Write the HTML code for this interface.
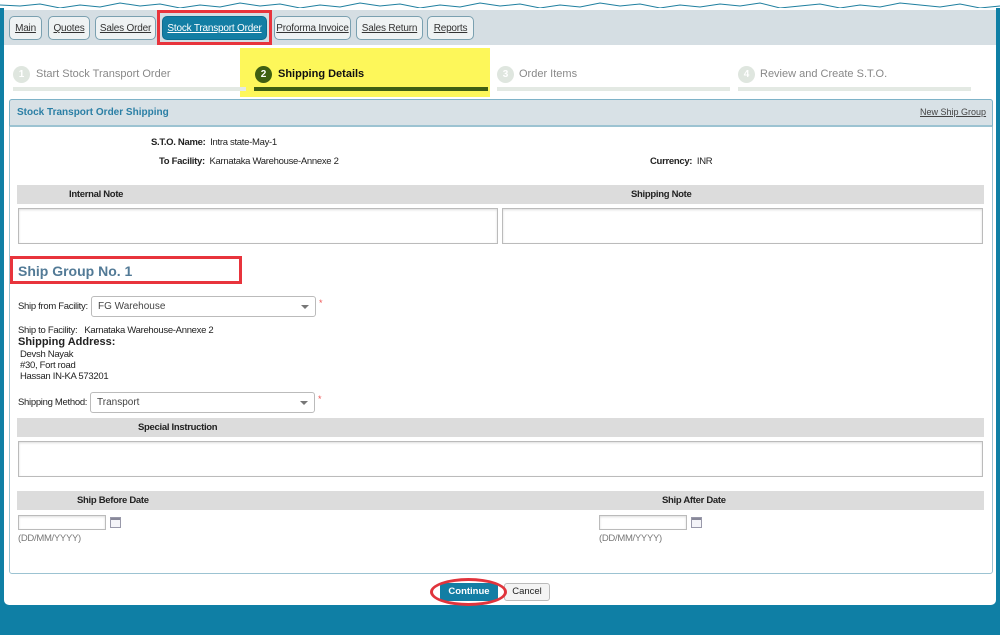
<!DOCTYPE html>
<html><head><meta charset="utf-8"><style>
*{margin:0;padding:0;box-sizing:border-box}
body{width:1000px;height:635px;background:#0f7fa5;font-family:"Liberation Sans",Arial,sans-serif;position:relative;overflow:hidden;color:#222}
.a{position:absolute}
.panel{left:4px;top:8px;width:992px;height:597px;background:#fff;border-radius:0 0 5px 5px}
.tabbar{left:4px;top:10px;width:992px;height:35px;background:#d5dee3}
.tab{position:absolute;top:16px;height:24px;border:1px solid #7aa0b0;border-radius:5px;background:#eef2f3;font-size:10px;line-height:23px;text-align:center;text-decoration:underline;color:#333;letter-spacing:-0.2px}
.step{font-size:11px;color:#888;top:68px}
.circ{position:absolute;top:66px;width:17px;height:17px;border-radius:50%;background:#dfe6df;color:#fff;font-size:10px;font-weight:bold;text-align:center;line-height:17px}
.ul{position:absolute;top:87px;height:4px;background:#e3e9e3}
.bar{position:absolute;height:19px;background:#dcdcdc;font-size:9.5px;font-weight:bold;line-height:19px;letter-spacing:-0.3px}
.ta{position:absolute;border:1px solid #bbb;background:#fff;box-shadow:inset 0 1px 2px #ddd}
.lbl{font-size:9.5px;letter-spacing:-0.3px}
.sel{position:absolute;height:21px;border:1px solid #bbb;border-radius:3px;background:#fff;font-size:10px;line-height:20px;padding-left:6px;color:#444}
.sel:after{content:"";position:absolute;right:6px;top:8px;border:4px solid transparent;border-top:4px solid #777}
.cal{position:absolute;width:11px;height:11px;border:1px solid #99a;background:linear-gradient(#889 0 2px,#f4f4f8 2px)}
</style></head><body>
<div class="a" style="left:0;top:0;width:1000px;height:12px;background:#fff"></div>
<svg class="a" style="left:0;top:0" width="1000" height="12"><path d="M0 5 L20 6 40 4 60 8 80 5 100 7 120 3 140 6 160 4 180 8 200 5 220 7 240 3 260 6 280 4 300 8 320 5 340 7 360 3 380 6 400 4 420 8 440 5 460 7 480 3 500 6 520 4 540 8 560 5 580 7 600 3 620 6 640 4 660 8 680 5 700 7 720 4 740 6 760 3 780 8 800 6 820 4 840 8 860 5 880 7 900 3 920 5 940 7 960 4 980 8 1000 6" fill="none" stroke="#1f7f9f" stroke-width="1"/></svg>
<div class="a" style="left:0;top:8px;width:1000px;height:627px;background:#0f7fa5"></div>
<div class="a panel"></div>
<div class="a tabbar"></div>
<div class="tab" style="left:9px;width:33px">Main</div>
<div class="tab" style="left:48px;width:42px">Quotes</div>
<div class="tab" style="left:95px;width:61px">Sales Order</div>
<div class="a" style="left:157px;top:10px;width:115px;height:35px;border:3px solid #e8343c"></div>
<div class="tab" style="left:162px;width:105px;background:#137ea4;color:#fff;border-color:#0d6d8f">Stock Transport Order</div>
<div class="tab" style="left:274px;width:77px">Proforma Invoice</div>
<div class="tab" style="left:356px;width:67px">Sales Return</div>
<div class="tab" style="left:427px;width:47px">Reports</div>

<div class="a" style="left:240px;top:48px;width:250px;height:49px;background:#fdf75a"></div>
<div class="circ" style="left:13px">1</div><div class="a step" style="left:36px">Start Stock Transport Order</div>
<div class="ul" style="left:13px;width:233px"></div>
<div class="circ" style="left:255px;background:#3f5f12">2</div><div class="a step" style="left:278px;color:#111;font-weight:bold">Shipping Details</div>
<div class="ul" style="left:254px;width:234px;background:#3f5f12"></div>
<div class="circ" style="left:497px">3</div><div class="a step" style="left:519px">Order Items</div>
<div class="ul" style="left:497px;width:233px"></div>
<div class="circ" style="left:738px">4</div><div class="a step" style="left:760px">Review and Create S.T.O.</div>
<div class="ul" style="left:738px;width:233px"></div>

<div class="a" style="left:9px;top:99px;width:984px;height:475px;border:1px solid #9cc3d2;border-radius:3px"></div>
<div class="a" style="left:9px;top:99px;width:984px;height:28px;background:#d8e1e6;border:1px solid #7fb3c8;border-bottom:2px solid #9cc3d2;border-radius:3px 3px 0 0"></div>
<div class="a" style="left:17px;top:107px;font-size:10px;font-weight:bold;color:#2b7fa5">Stock Transport Order Shipping</div>
<div class="a" style="left:920px;top:107px;font-size:9px;text-decoration:underline;color:#444">New Ship Group</div>

<div class="a lbl" style="left:151px;top:137px"><b>S.T.O. Name:</b>&nbsp; Intra state-May-1</div>
<div class="a lbl" style="left:159px;top:156px"><b>To Facility:</b>&nbsp; Karnataka Warehouse-Annexe 2</div>
<div class="a lbl" style="left:650px;top:156px"><b>Currency:</b>&nbsp; INR</div>

<div class="bar" style="left:17px;top:185px;width:967px"><span class="a" style="left:52px">Internal Note</span><span class="a" style="left:614px">Shipping Note</span></div>
<div class="ta" style="left:18px;top:208px;width:480px;height:36px"></div>
<div class="ta" style="left:502px;top:208px;width:481px;height:36px"></div>

<div class="a" style="left:10px;top:256px;width:232px;height:28px;border:3px solid #e8343c"></div>
<div class="a" style="left:18px;top:263px;font-size:14px;font-weight:bold;color:#527a96">Ship Group No. 1</div>

<div class="a lbl" style="left:18px;top:301px">Ship from Facility:</div>
<div class="sel" style="left:91px;top:296px;width:225px">FG Warehouse</div>
<div class="a" style="left:319px;top:298px;color:#e55;font-size:9px">*</div>
<div class="a lbl" style="left:18px;top:325px">Ship to Facility: &nbsp; Karnataka Warehouse-Annexe 2</div>
<div class="a" style="left:18px;top:336px;font-size:11px;font-weight:bold">Shipping Address:</div>
<div class="a lbl" style="left:20px;top:349px;line-height:11px">Devsh Nayak<br>#30, Fort road<br>Hassan IN-KA 573201</div>
<div class="a lbl" style="left:18px;top:397px">Shipping Method:</div>
<div class="sel" style="left:90px;top:392px;width:225px">Transport</div>
<div class="a" style="left:318px;top:394px;color:#e55;font-size:9px">*</div>

<div class="bar" style="left:17px;top:418px;width:967px"><span class="a" style="left:121px">Special Instruction</span></div>
<div class="ta" style="left:18px;top:441px;width:965px;height:36px"></div>

<div class="bar" style="left:17px;top:491px;width:967px"><span class="a" style="left:60px">Ship Before Date</span><span class="a" style="left:645px">Ship After Date</span></div>
<div class="ta" style="left:18px;top:515px;width:88px;height:15px"></div>
<div class="cal" style="left:110px;top:517px"></div>
<div class="a lbl" style="left:18px;top:533px;color:#777">(DD/MM/YYYY)</div>
<div class="ta" style="left:599px;top:515px;width:88px;height:15px"></div>
<div class="cal" style="left:691px;top:517px"></div>
<div class="a lbl" style="left:599px;top:533px;color:#777">(DD/MM/YYYY)</div>

<div class="a" style="left:440px;top:583px;width:58px;height:18px;background:#137ea4;border-radius:3px;color:#fff;font-size:9.5px;font-weight:bold;text-align:center;line-height:18px">Continue</div>
<div class="a" style="left:504px;top:583px;width:46px;height:18px;background:#f4f4f4;border:1px solid #bbb;border-radius:3px;font-size:9.5px;text-align:center;line-height:16px">Cancel</div>
<div class="a" style="left:430px;top:578px;width:77px;height:28px;border:3px solid #e0343c;border-radius:50%"></div>
</body></html>
